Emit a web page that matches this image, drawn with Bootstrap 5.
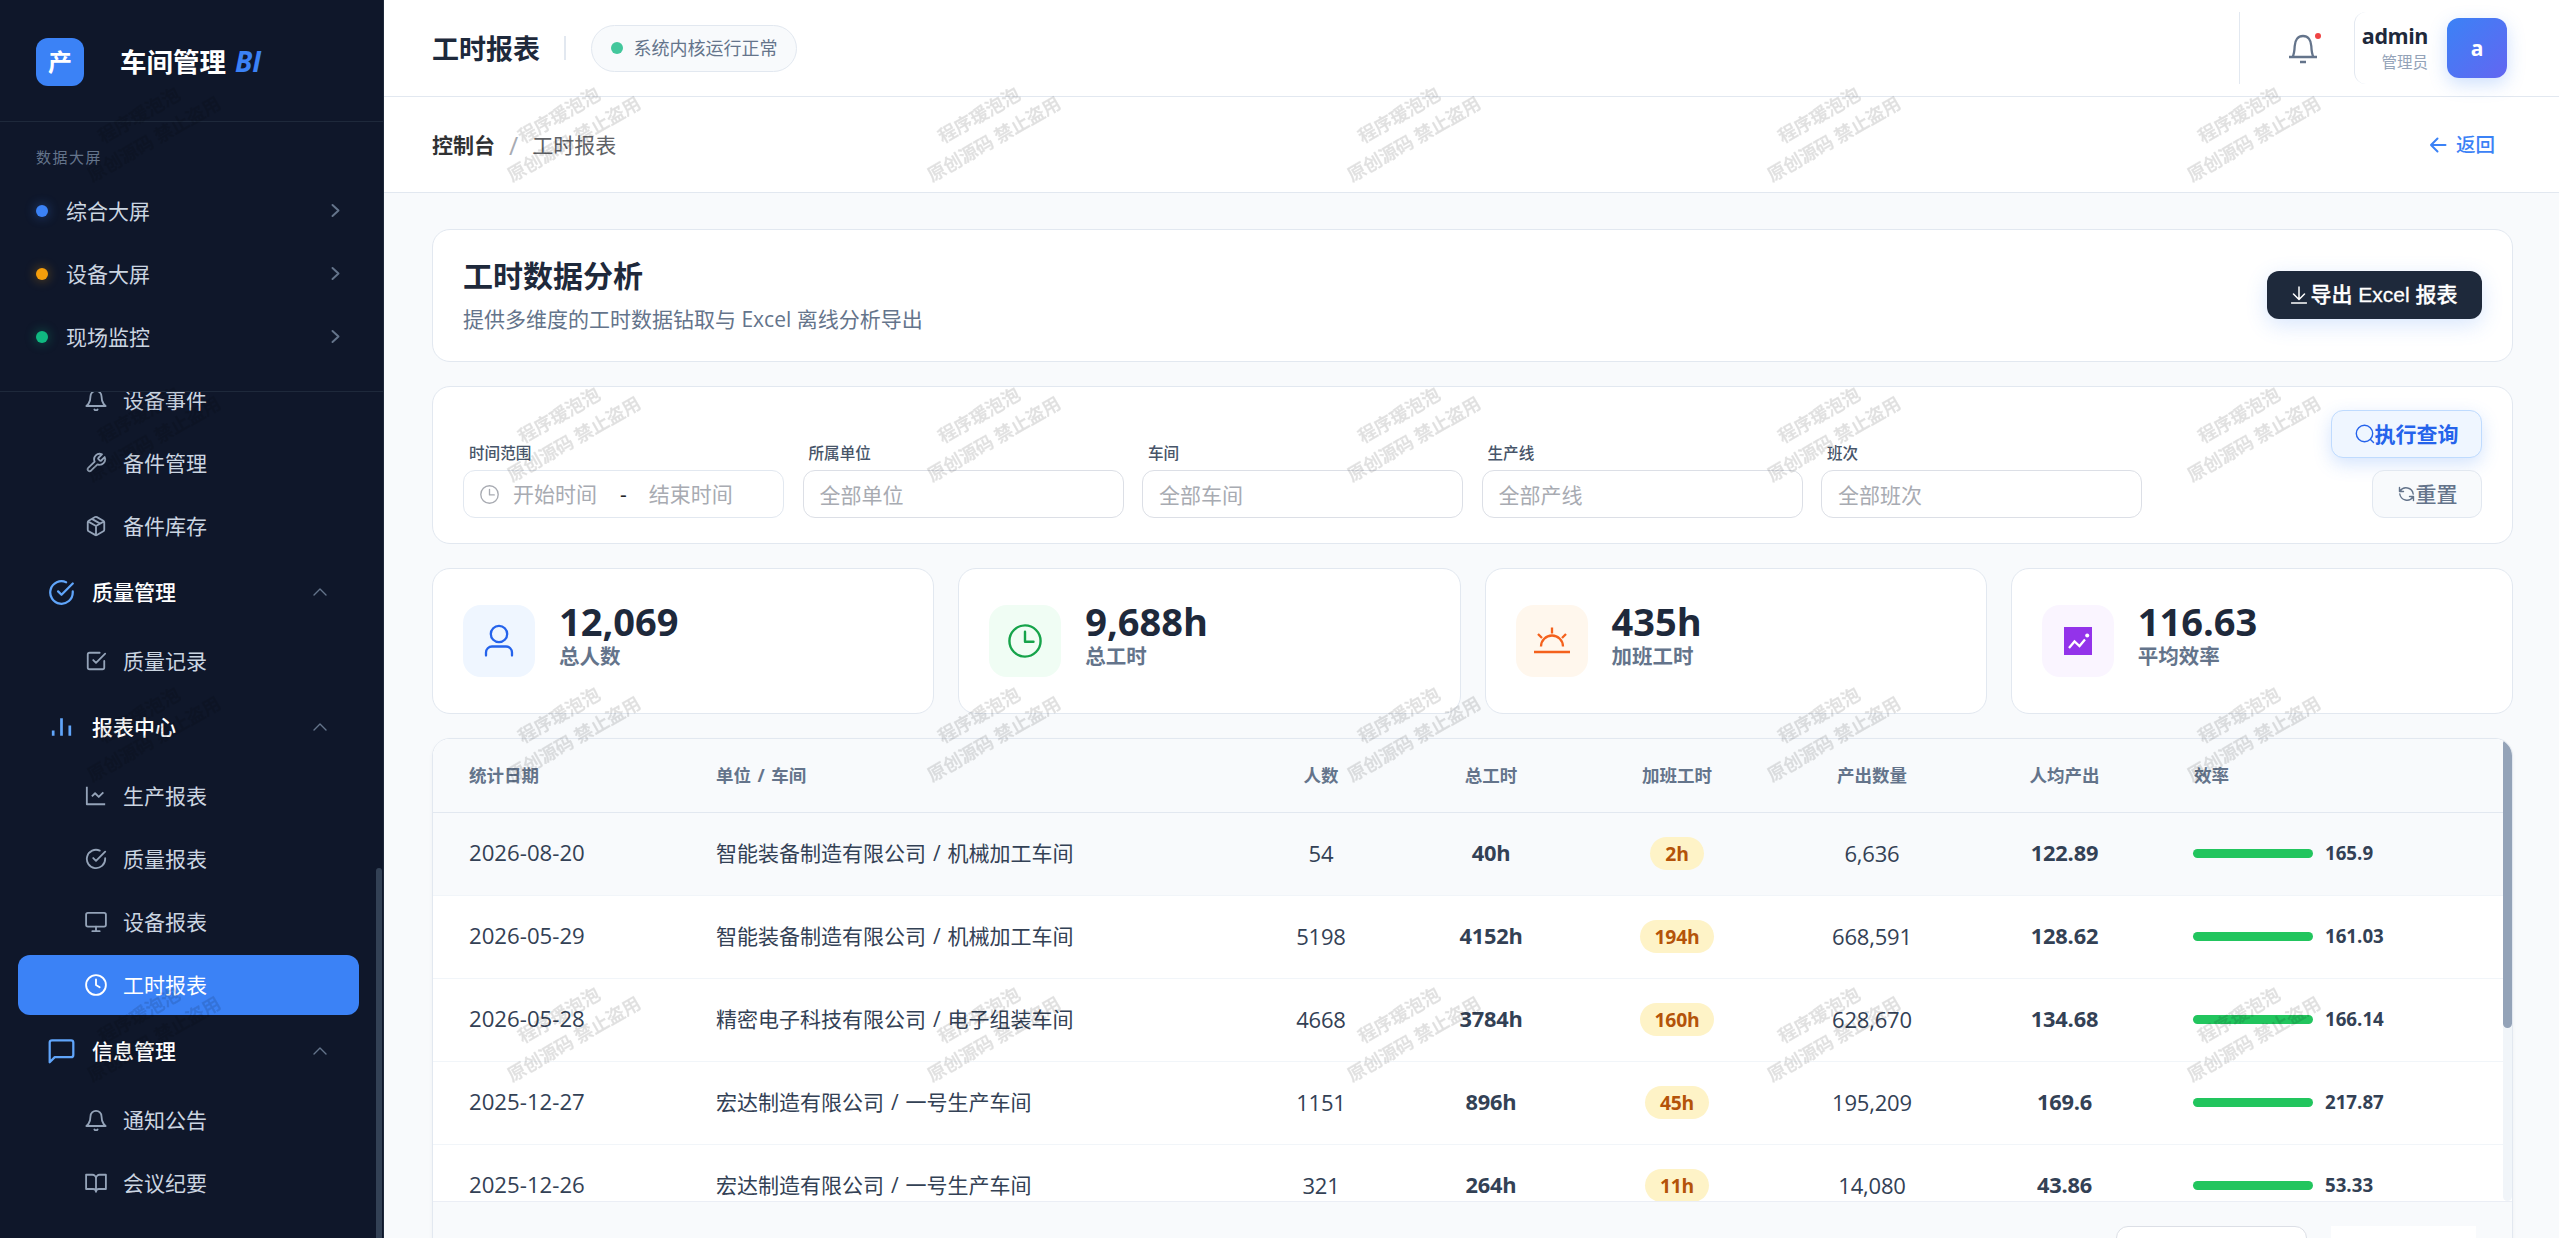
<!DOCTYPE html>
<html lang="zh-CN">
<head>
<meta charset="utf-8">
<title>工时报表</title>
<link rel="stylesheet" href="https://cdn.jsdelivr.net/npm/bootstrap@5.3.0/dist/css/bootstrap.min.css">
<style>
body{font-family:"Open Sans","Noto Sans CJK SC",sans-serif;font-size:21px;line-height:30px;color:#334155;background:#f8fafc;height:1238px;overflow:hidden}
svg.ico{fill:none;stroke:currentColor;stroke-width:2;stroke-linecap:round;stroke-linejoin:round;flex:none;display:block}
.side{width:384px;height:1238px;background:#0f172a;border-right:1px solid #1e293b;color:#cbd5e1}
.brand{height:122px;padding:2px 36px 0;border-bottom:1px solid #1e293b}
.logo{width:48px;height:48px;border-radius:12px;background:#3b82f6;color:#fff;font-weight:700;font-size:24px}
.brand-name{margin-left:36px;font-size:26.5px;font-weight:700;color:#fff;white-space:nowrap}
.brand-name i{color:#3b82f6;margin-left:2px;font-size:28px}
.screens{height:270px;border-bottom:1px solid #1e293b;padding:20px 36px 0}
.cap{font-size:15px;letter-spacing:1.5px;color:#64748b}
.screen-item{height:63px}
.screens .cap{margin-bottom:7px}
.dotc{width:12px;height:12px;border-radius:50%;margin-right:18px;background:var(--c);box-shadow:0 0 12px color-mix(in srgb,var(--c) 45%,transparent)}
.screen-item .ico{margin-left:auto;margin-right:7px;color:#64748b}
.menu{height:846px;padding:0 24px 0 18px}
.menu-in{margin-top:-22px}
.m-item{height:60px;margin-bottom:3px;padding-left:67px;border-radius:12px;color:#cbd5e1}
.m-item .ico{color:#94a3b8;margin-right:16px}
.m-item.on{background:#3b82f6;color:#fff}.m-item.on .ico{color:#fff}
.m-head{height:66px;margin-bottom:6px;padding:0 32px 0 30px;color:#fff;font-weight:500}
.m-head .ico:first-child{color:#60a5fa;margin-right:17px}
.m-head .ico:last-child{margin-left:auto;color:#64748b}
.side-bar-thumb{position:absolute;right:1px;top:868px;width:6px;height:380px;border-radius:3px;background:#334155}
.topbar{height:97px;background:#fff;border-bottom:1px solid #e2e8f0;padding:0 52px 0 48px}
.page-name{font-size:27px;font-weight:700;color:#1e293b;padding-top:2px}
.vline{width:2px;height:24px;background:#e2e8f0;margin:0 25px 0 24px}
.pill{height:47px;width:206px;border:1px solid #e2e8f0;border-radius:24px;background:#f8fafc;font-size:18px;color:#64748b}
.pill i{width:12px;height:12px;border-radius:50%;background:#43c79c;margin-right:11px}
.sep{height:72px;border-left:1.5px solid #e2e8f0;width:49px}
.bellbox{width:66px;color:#64748b}
.bellbox b{position:absolute;width:6px;height:6px;border-radius:50%;background:#ef4444;left:27px;top:1px}
.user{height:72px;border-left:1.5px solid #e2e8f0;border-radius:12px;padding-left:7px}
.uname{font-size:21.5px;letter-spacing:-.45px;font-weight:700;color:#1e293b;line-height:28px}
.role{font-size:15.5px;line-height:24px;color:#94a3b8}
.ava{width:60px;height:60px;border-radius:12px;margin-left:19px;background:linear-gradient(135deg,#3b82f6,#6366f1);color:#fff;font-weight:700;box-shadow:0 6px 18px rgba(59,130,246,.25)}
.crumb{height:96px;background:#fff;border-bottom:1px solid #e2e8f0;padding:0 64px 0 48px}
.crumb strong{color:#303133}.crumb em{font-style:normal;font-size:25px;color:#a8abb2;margin:0 14px 0 14px}.crumb span{color:#606266}
.back{font-size:19.5px;color:#3b82f6!important;font-weight:500;padding-top:1px}
.content{padding:36px 46px 0 48px;gap:24px}
.panel{background:#fff;border:1.5px solid #e2e8f0;border-radius:18px}
.hero{height:133px;padding:0 30px 2px}
.hero h2{font-size:30px;line-height:40px;font-weight:700;color:#1e293b;margin:0 0 8px}
.hero p{margin:0;color:#64748b}
.btn-x{width:215px;height:48px;border-radius:12px;background:#1e293b;color:#fff;font-weight:500;-webkit-text-stroke:.3px #fff;box-shadow:0 6px 21px rgba(59,130,246,.2);font-family:"Liberation Sans","Noto Sans CJK SC",sans-serif}
.filters{height:158px;padding:0 30px 25px;gap:18.5px}
.fld label{font-size:15.6px;line-height:24px;font-weight:500;color:#475569;padding-left:6px;margin-bottom:5px;display:block}
.inp{width:321px;height:48px;border:1.5px solid #dcdfe6;border-radius:12px;color:#a8abb2;padding:2px 16px 0;background:#fff}
.inp.range{border-color:#e2e8f0;padding-top:0}
.btn-q{width:151px;height:48px;border-radius:12px;border:1.5px solid #bfdbfe;background:#eff6ff;color:#2563eb;font-weight:700;box-shadow:0 6px 18px rgba(59,130,246,.22);padding-bottom:1px}
.btn-r{width:110px;height:48px;border-radius:12px;border:1.5px solid #e2e8f0;background:#f8fafc;color:#64748b;font-weight:500;padding-bottom:1px}
.stats{gap:24px}
.stat{height:146px;padding:0 30px;flex:1 1 0}
.stat .figs{margin-top:-13px}
.tile{width:72px;height:72px;border-radius:18px;margin-right:24px}
.val{font-size:38px;line-height:44px;font-weight:700;color:#1e293b}
.lbl{font-size:20.5px;line-height:28px;font-weight:700;color:#64748b;margin-top:-1px}
.tcard{height:540px;overflow:hidden;background:#f8fafc;box-shadow:0 2px 4px rgba(30,41,59,.04)}
.tview{height:463px;border-bottom:1.5px solid #ebeef5;background:#fff}
.tdata{width:2070px;table-layout:fixed;margin:0;flex:none;--bs-table-bg:transparent;border-color:#f1f5f9}
.tdata th{height:73px;padding:0 36px 1px;background:#f8fafc;color:#64748b;font-size:17.5px;font-weight:700;vertical-align:middle;border-bottom:1.5px solid #e2e8f0;white-space:nowrap;word-spacing:2px}
.tdata td{height:83px;padding:0 36px 1px;vertical-align:middle;border-bottom:1.5px solid #f1f5f9;white-space:nowrap;color:#334155;word-spacing:1.5px}
.tdata .n{text-align:center;padding:0 0 1px;font-size:22px;letter-spacing:-.2px}
.tdata .dt{font-size:22.2px}
.tdata .b{font-weight:700;font-size:21.8px}
.tdata tr.hov td{background:#f8fafc}
.ot{display:inline-block;height:33px;line-height:33px;padding:0 15px;border-radius:17px;background:#fef3c7;color:#b45309;font-weight:700;font-size:19.3px;vertical-align:middle}
.bar{width:120px;height:9px;border-radius:5px;background:#22c55e;margin-right:12px}
.pct{font-size:18.7px;font-weight:700;line-height:24px}
.effc{margin-left:-1px}
.track{width:9px;height:462px;background:#f1f5f9;border-radius:5px;margin-left:auto}
.track div{height:289px;background:#94a3b8;border-radius:5px}
.foot{padding:24px 36px 0 0;gap:24px}
.psel{width:191px;height:48px;border:1.5px solid #dcdfe6;border-radius:12px;background:#fff}
.pbox{width:145px;height:48px;background:#fff}
.wm{position:fixed;inset:0;width:2559px;height:1238px;pointer-events:none;z-index:9}
</style>
<script src="https://cdn.jsdelivr.net/npm/bootstrap@5.3.0/dist/js/bootstrap.bundle.min.js"></script>
</head>
<body>
<svg width="0" height="0" class="position-absolute">
<symbol id="bell" viewBox="0 0 24 24"><path d="M18 8A6 6 0 0 0 6 8c0 8-4.500 10.500-4.500 10.500h21S18 16 18 8M13.700 22.300a2 2 0 0 1-3.400 0"/></symbol>
<symbol id="wrench" viewBox="0 0 24 24"><path d="M14.7 6.3a1 1 0 0 0 0 1.4l1.6 1.6a1 1 0 0 0 1.4 0l3.77-3.77a6 6 0 0 1-7.94 7.94l-6.91 6.91a2.12 2.12 0 0 1-3-3l6.91-6.91a6 6 0 0 1 7.94-7.94l-3.76 3.76z"/></symbol>
<symbol id="cube" viewBox="0 0 24 24"><path d="M16.5 9.4l-9-5.19M21 16V8a2 2 0 0 0-1-1.73l-7-4a2 2 0 0 0-2 0l-7 4A2 2 0 0 0 3 8v8a2 2 0 0 0 1 1.73l7 4a2 2 0 0 0 2 0l7-4A2 2 0 0 0 21 16zM3.27 6.96L12 12.01l8.73-5.05M12 22.08V12"/></symbol>
<symbol id="okc" viewBox="0 0 24 24"><path d="M22 11.08V12a10 10 0 1 1-5.93-9.14M22 4L12 14.01l-3-3"/></symbol>
<symbol id="oks" viewBox="0 0 24 24"><path d="M9 11l3 3L22 4M21 12v7a2 2 0 0 1-2 2H5a2 2 0 0 1-2-2V5a2 2 0 0 1 2-2h11"/></symbol>
<symbol id="bars" viewBox="0 0 24 24"><path d="M20 20V10M12 20V3M4 20v-5" stroke-linecap="butt" stroke-width="2.600"/></symbol>
<symbol id="line" viewBox="0 0 24 24"><path d="M2 2v19h20M7.500 12.500l3.500-3.500 4 4 5-5" stroke-linecap="butt"/></symbol>
<symbol id="screen" viewBox="0 0 24 24"><rect x="1.200" y="2" width="21.600" height="15" rx="2"/><path d="M8 22h8M12 17v5"/></symbol>
<symbol id="clock" viewBox="0 0 24 24"><circle cx="12" cy="12" r="10.800"/><path d="M12 6v6l4 2.500"/></symbol>
<symbol id="msg" viewBox="0 0 24 24"><path d="M22.500 15a2 2 0 0 1-2 2H6l-4.500 4.500V4a2 2 0 0 1 2-2h17a2 2 0 0 1 2 2z"/></symbol>
<symbol id="book" viewBox="0 0 24 24"><path d="M1.200 3h6.800a4 4 0 0 1 4 4V21.500a3 3 0 0 0-3-3H1.200zM22.800 3H16a4 4 0 0 0-4 4V21.500a3 3 0 0 1 3-3h7.800z"/></symbol>
<symbol id="up" viewBox="0 0 14 8"><path d="M1 7l6-6 6 6" stroke-width="1.400"/></symbol>
<symbol id="clk" viewBox="0 0 24 24"><circle cx="12" cy="12" r="11"/><path d="M12 5.500v7h6"/></symbol>
</svg>

<div class="d-flex">
<aside class="side position-relative flex-shrink-0 overflow-hidden">
  <div class="brand d-flex align-items-center">
    <div class="logo d-flex align-items-center justify-content-center">产</div>
    <div class="brand-name">车间管理 <i>BI</i></div>
  </div>
  <div class="screens">
    <div class="cap">数据大屏</div>
    <div class="screen-item d-flex align-items-center" style="--c:#3b82f6"><span class="dotc"></span>综合大屏<svg class="ico" width="9" height="15" viewBox="0 0 9 15"><path d="M1.500 2l6 5.500-6 5.500"/></svg></div>
    <div class="screen-item d-flex align-items-center" style="--c:#f59e0b"><span class="dotc"></span>设备大屏<svg class="ico" width="9" height="15" viewBox="0 0 9 15"><path d="M1.500 2l6 5.500-6 5.500"/></svg></div>
    <div class="screen-item d-flex align-items-center" style="--c:#10b981"><span class="dotc"></span>现场监控<svg class="ico" width="9" height="15" viewBox="0 0 9 15"><path d="M1.500 2l6 5.500-6 5.500"/></svg></div>
  </div>
  <nav class="menu overflow-hidden"><div class="menu-in">
    <div class="m-item d-flex align-items-center"><svg class="ico" width="22" height="22"><use href="#bell"/></svg>设备事件</div>
    <div class="m-item d-flex align-items-center"><svg class="ico" width="22" height="22"><use href="#wrench"/></svg>备件管理</div>
    <div class="m-item d-flex align-items-center"><svg class="ico" width="22" height="22"><use href="#cube"/></svg>备件库存</div>
    <div class="m-head d-flex align-items-center"><svg class="ico" width="27" height="27"><use href="#okc"/></svg>质量管理<svg class="ico" width="14" height="8"><use href="#up"/></svg></div>
    <div class="m-item d-flex align-items-center"><svg class="ico" width="22" height="22"><use href="#oks"/></svg>质量记录</div>
    <div class="m-head d-flex align-items-center"><svg class="ico" width="27" height="27" viewBox="-1 0 26 24"><use href="#bars" width="24" height="24"/></svg>报表中心<svg class="ico" width="14" height="8"><use href="#up"/></svg></div>
    <div class="m-item d-flex align-items-center"><svg class="ico" width="22" height="22"><use href="#line"/></svg>生产报表</div>
    <div class="m-item d-flex align-items-center"><svg class="ico" width="22" height="22"><use href="#okc"/></svg>质量报表</div>
    <div class="m-item d-flex align-items-center"><svg class="ico" width="22" height="22"><use href="#screen"/></svg>设备报表</div>
    <div class="m-item on d-flex align-items-center"><svg class="ico" width="22" height="22"><use href="#clock"/></svg>工时报表</div>
    <div class="m-head d-flex align-items-center"><svg class="ico" width="27" height="27"><use href="#msg"/></svg>信息管理<svg class="ico" width="14" height="8"><use href="#up"/></svg></div>
    <div class="m-item d-flex align-items-center"><svg class="ico" width="22" height="22"><use href="#bell"/></svg>通知公告</div>
    <div class="m-item d-flex align-items-center"><svg class="ico" width="22" height="22"><use href="#book"/></svg>会议纪要</div>
  </div></nav>
  <div class="side-bar-thumb"></div>
</aside>

<main class="flex-grow-1">
  <header class="topbar d-flex align-items-center">
    <span class="page-name">工时报表</span><span class="vline"></span>
    <span class="pill d-flex align-items-center justify-content-center"><i></i>系统内核运行正常</span>
    <div class="ms-auto d-flex align-items-center">
      <div class="sep"></div>
      <div class="bellbox"><div class="position-relative" style="width:30px"><svg class="ico" width="30" height="32" viewBox="0 0 30 32" style="stroke-linecap:butt"><path d="M1 25h28M4.500 25c1.800-3 2-6 2.200-11C7 8 10 4 15 4s8 4 8.300 10c.2 5 .4 8 2.200 11M12 30h6" stroke-width="2.300"/></svg><b></b></div></div>
      <div class="user d-flex align-items-center"><div class="text-end"><div class="uname">admin</div><div class="role">管理员</div></div></div>
      <div class="ava d-flex align-items-center justify-content-center">a</div>
    </div>
  </header>
  <div class="crumb d-flex align-items-center">
    <strong>控制台</strong><em>/</em><span>工时报表</span>
    <a class="back ms-auto d-flex align-items-center text-decoration-none"><svg class="ico me-2" width="19" height="16" viewBox="0 0 19 16"><path d="M16.500 8H2M8.500 1.500L2 8l6.500 6.500"/></svg>返回</a>
  </div>

  <div class="content d-flex flex-column">
    <section class="panel hero d-flex align-items-center justify-content-between">
      <div><h2>工时数据分析</h2><p>提供多维度的工时数据钻取与 Excel 离线分析导出</p></div>
      <div class="btn-x d-flex align-items-center justify-content-center"><svg class="ico" style="margin-right:3px" width="16" height="18" viewBox="0 0 16 18"><path d="M8 1v12M2.500 8L8 13.500 13.500 8M.5 17h15" stroke-width="1.500"/></svg>导出 Excel 报表</div>
    </section>

    <section class="panel filters d-flex align-items-end">
      <div class="fld"><label>时间范围</label><div class="inp range d-flex align-items-center"><svg class="ico" width="19" height="19"><use href="#clk" stroke-width="1.700"/></svg><span style="margin-left:14px">开始时间</span><span class="text-dark" style="margin:0 22px 0 23px">-</span>结束时间</div></div>
      <div class="fld"><label>所属单位</label><div class="inp d-flex align-items-center">全部单位</div></div>
      <div class="fld"><label>车间</label><div class="inp d-flex align-items-center">全部车间</div></div>
      <div class="fld"><label>生产线</label><div class="inp d-flex align-items-center">全部产线</div></div>
      <div class="fld"><label>班次</label><div class="inp d-flex align-items-center">全部班次</div></div>
      <div class="ms-auto d-flex flex-column align-items-end" style="gap:12px">
        <div class="btn-q d-flex align-items-center justify-content-center"><svg class="ico" width="20" height="20" viewBox="0 0 20 20"><circle cx="9.500" cy="9.500" r="8.200" stroke-width="1.400"/><path d="M15.500 15.500l3 3" stroke-width="1.400"/></svg>执行查询</div>
        <div class="btn-r d-flex align-items-center justify-content-center"><svg class="ico" width="19" height="18" viewBox="0 0 19 18"><path d="M2.500 6.500V2.500M2.500 6.500h4M3 6.200A7.200 7.200 0 0 1 16.200 9M16.500 11.500v4M16.500 11.500h-4M16 11.800A7.200 7.200 0 0 1 2.800 9" stroke-width="1.400"/></svg>重置</div>
      </div>
    </section>

    <section class="stats d-flex">
      <div class="panel stat d-flex align-items-center"><div class="tile d-flex align-items-center justify-content-center" style="background:#eff6ff;color:#2563eb"><svg class="ico" width="30" height="34" viewBox="0 0 30 34"><circle cx="15" cy="10" r="8.200" stroke-width="2.300"/><path d="M2 31.500v-3a6 6 0 0 1 6-6h14a6 6 0 0 1 6 6v3" stroke-width="2.300"/></svg></div><div class="figs"><div class="val">12,069</div><div class="lbl">总人数</div></div></div>
      <div class="panel stat d-flex align-items-center"><div class="tile d-flex align-items-center justify-content-center" style="background:#f0fdf4;color:#16a34a"><svg class="ico" width="34" height="34"><use href="#clk" stroke-width="1.700"/></svg></div><div class="figs"><div class="val">9,688h</div><div class="lbl">总工时</div></div></div>
      <div class="panel stat d-flex align-items-center"><div class="tile d-flex align-items-center justify-content-center" style="background:#fff7ed;color:#f4611c"><svg class="ico" width="36" height="28" viewBox="0 0 36 28" style="stroke-linecap:butt"><path d="M0 25h36M7 19.500a11 11 0 0 1 22 0M18 .5v6M4 7l4 4M32 7l-4 4" stroke-width="2.300"/></svg></div><div class="figs"><div class="val">435h</div><div class="lbl">加班工时</div></div></div>
      <div class="panel stat d-flex align-items-center"><div class="tile d-flex align-items-center justify-content-center" style="background:#faf5ff;color:#9333ea"><svg width="28" height="28" viewBox="0 0 28 28"><path fill="#9333ea" d="M0 0h28v28H0z"/><path d="M5 21l5.500-6.500 5 4.500L21 12.500" fill="none" stroke="#fff" stroke-width="2.300"/><circle cx="23.200" cy="8.500" r="2" fill="#fff"/></svg></div><div class="figs"><div class="val">116.63</div><div class="lbl">平均效率</div></div></div>
    </section>

    <section class="panel tcard">
      <div class="tview d-flex overflow-hidden">
        <table class="table tdata">
          <colgroup><col style="width:247px"><col style="width:561px"><col style="width:160px"><col style="width:180px"><col style="width:192px"><col style="width:198px"><col style="width:187px"><col></colgroup>
          <thead><tr><th>统计日期</th><th>单位 / 车间</th><th class="text-center">人数</th><th class="text-center">总工时</th><th class="text-center">加班工时</th><th class="text-center">产出数量</th><th class="text-center">人均产出</th><th>效率</th></tr></thead>
          <tbody>
          <tr class="hov"><td class="dt">2026-08-20</td><td>智能装备制造有限公司 / 机械加工车间</td><td class="n">54</td><td class="n b">40h</td><td class="n"><span class="ot">2h</span></td><td class="n">6,636</td><td class="n b">122.89</td><td><div class="effc d-flex align-items-center"><div class="bar"></div><span class="pct">165.9</span></div></td></tr>
          <tr><td class="dt">2026-05-29</td><td>智能装备制造有限公司 / 机械加工车间</td><td class="n">5198</td><td class="n b">4152h</td><td class="n"><span class="ot">194h</span></td><td class="n">668,591</td><td class="n b">128.62</td><td><div class="effc d-flex align-items-center"><div class="bar"></div><span class="pct">161.03</span></div></td></tr>
          <tr><td class="dt">2026-05-28</td><td>精密电子科技有限公司 / 电子组装车间</td><td class="n">4668</td><td class="n b">3784h</td><td class="n"><span class="ot">160h</span></td><td class="n">628,670</td><td class="n b">134.68</td><td><div class="effc d-flex align-items-center"><div class="bar"></div><span class="pct">166.14</span></div></td></tr>
          <tr><td class="dt">2025-12-27</td><td>宏达制造有限公司 / 一号生产车间</td><td class="n">1151</td><td class="n b">896h</td><td class="n"><span class="ot">45h</span></td><td class="n">195,209</td><td class="n b">169.6</td><td><div class="effc d-flex align-items-center"><div class="bar"></div><span class="pct">217.87</span></div></td></tr>
          <tr><td class="dt">2025-12-26</td><td>宏达制造有限公司 / 一号生产车间</td><td class="n">321</td><td class="n b">264h</td><td class="n"><span class="ot">11h</span></td><td class="n">14,080</td><td class="n b">43.86</td><td><div class="effc d-flex align-items-center"><div class="bar"></div><span class="pct">53.33</span></div></td></tr>
          </tbody>
        </table>
        <div class="track"><div></div></div>
      </div>
      <div class="foot d-flex justify-content-end"><div class="psel"></div><div class="pbox"></div></div>
    </section>
  </div>
</main>
</div>

<svg class="wm">
  <defs><pattern id="wmp" width="420" height="300" patternUnits="userSpaceOnUse" patternTransform="translate(-62,-23)">
    <g transform="translate(209,150) rotate(-30)" font-size="18.200" fill="#000" stroke="#000" stroke-width=".4" opacity=".12" text-anchor="middle" font-weight="500"><text x="-1" y="-7.500">程序瑗泡泡</text><text x="0" y="20.500">原创源码 禁止盗用</text></g>
  </pattern></defs>
  <rect width="2559" height="1238" fill="url(#wmp)"/>
</svg>
</body>
</html>
